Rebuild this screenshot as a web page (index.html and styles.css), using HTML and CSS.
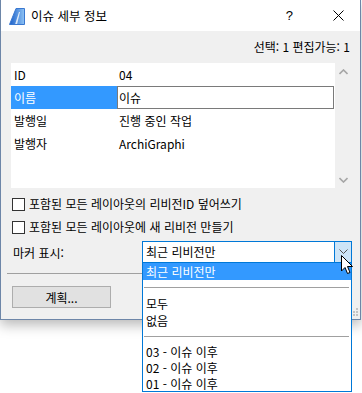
FILE: index.html
```html
<!DOCTYPE html>
<html lang="ko">

<head>
    <meta charset="UTF-8">
    <title>이슈 세부 정보</title>
    <link rel="stylesheet" href="styles.css">
</head>

<body>
    <div class="window">
        <!-- Title bar -->
        <div class="titlebar">
            <svg class="appIcon" width="16" height="17" viewBox="0 0 16 17">
                <defs>
                    <linearGradient id="ic" x1="0" y1="0" x2="1" y2="0">
                        <stop offset="0" stop-color="#1b5fc8" />
                        <stop offset="1" stop-color="#8ec3f5" />
                    </linearGradient>
                </defs>
                <path d="M0.5 16.5 L7 0.5 L15.5 0.5 L15.5 16.5 Z" fill="url(#ic)" />
                <path d="M6 16.5 L10 4 L11 4 L8 16.5 Z" fill="#ffffff" opacity="0.8" />
                <path d="M0.5 16.5 L7 0.5 L15.5 0.5 L15.5 16.5 Z" fill="none" stroke="#3a78d0" stroke-width="1" />
            </svg>
            <span class="title">이슈 세부 정보</span>
            <span class="help">?</span>
            <svg class="close" width="11" height="11" viewBox="0 0 11 11">
                <path d="M0.5 0.5 L10.5 10.5 M10.5 0.5 L0.5 10.5" stroke="#000" stroke-width="1" />
            </svg>
        </div>

        <div class="content">
            <div class="status">선택: 1 편집가능: 1</div>

            <div class="listBox">
                <div class="rows">
                    <div class="row">
                        <span class="key">ID</span>
                        <span class="val">04</span>
                    </div>
                    <div class="row selected">
                        <span class="key">이름</span>
                        <span class="val edit">이슈</span>
                    </div>
                    <div class="row">
                        <span class="key">발행일</span>
                        <span class="val">진행 중인 작업</span>
                    </div>
                    <div class="row">
                        <span class="key">발행자</span>
                        <span class="val">ArchiGraphi</span>
                    </div>
                </div>
                <div class="scrollbar">
                    <svg width="9" height="6" viewBox="0 0 9 6">
                        <path d="M0.5 5 L4.5 1 L8.5 5" fill="none" stroke="#a6a6a6" stroke-width="1.6" />
                    </svg>
                    <svg width="9" height="6" viewBox="0 0 9 6">
                        <path d="M0.5 1 L4.5 5 L8.5 1" fill="none" stroke="#a6a6a6" stroke-width="1.6" />
                    </svg>
                </div>
            </div>

            <div class="checks">
                <label class="check"><span class="box"></span>포함된 모든 레이아웃의 리비전ID 덮어쓰기</label>
                <label class="check"><span class="box"></span>포함된 모든 레이아웃에 새 리비전 만들기</label>
            </div>

            <div class="markerRow">
                <span class="markerLabel">마커 표시:</span>
                <div class="combo">
                    <span class="comboText">최근 리비전만</span>
                    <span class="comboBtn">
                        <svg width="9" height="6" viewBox="0 0 9 6">
                            <path d="M0.5 0.5 L4.5 4.5 L8.5 0.5" fill="none" stroke="#555" stroke-width="1" />
                        </svg>
                    </span>

                    <!-- open dropdown list -->
                    <div class="dropList">
                        <div class="item hot">최근 리비전만</div>
                        <div class="sep"></div>
                        <div class="item">모두</div>
                        <div class="item">없음</div>
                        <div class="sep"></div>
                        <div class="item small">03 - 이슈 이후</div>
                        <div class="item small">02 - 이슈 이후</div>
                        <div class="item small">01 - 이슈 이후</div>
                    </div>

                    <svg class="cursor" width="13" height="20" viewBox="0 0 13 20">
                        <path d="M0.5 0.5 L0.5 16 L4 12.5 L6.5 18.5 L9 17.5 L6.5 11.5 L11.5 11.5 Z" fill="#fff" stroke="#000" stroke-width="1" stroke-linejoin="round" />
                    </svg>
                </div>
            </div>

            <div class="divider"></div>

            <div class="buttons">
                <button class="planBtn">계획...</button>
            </div>
        </div>

        <svg class="grip" width="8" height="8" viewBox="0 0 8 8">
            <rect x="6" y="0" width="2" height="2" fill="#c4c4c4" />
            <rect x="3" y="3" width="2" height="2" fill="#c4c4c4" />
            <rect x="6" y="3" width="2" height="2" fill="#c4c4c4" />
            <rect x="0" y="6" width="2" height="2" fill="#c4c4c4" />
            <rect x="3" y="6" width="2" height="2" fill="#c4c4c4" />
            <rect x="6" y="6" width="2" height="2" fill="#c4c4c4" />
        </svg>
    </div>
</body>

</html>
```

FILE: styles.css
```css
html,
body {
    height: 393px;
}

body {
    margin: 0;
    background-color: #ffffff;
    font-family: "Noto Sans CJK KR", "Noto Sans", sans-serif;
    font-size: 12px;
    color: #000000;
}

.window {
    position: relative;
    width: 359px;
    background-color: #f0f0f0;
    border: 1px solid #6d86a8;
    border-top: none;
    box-shadow: 0 5px 12px rgba(0, 0, 0, 0.28);
}

/* title bar */
.titlebar {
    height: 31px;
    background-color: #ffffff;
    display: flex;
    align-items: center;
}

.appIcon {
    margin-left: 8px;
    margin-top: 1px;
}

.title {
    margin-left: 6px;
    font-size: 12.5px;
    line-height: 16px;
}

.help {
    margin-left: auto;
    font-size: 13px;
    line-height: 16px;
    font-family: "Liberation Sans", sans-serif;
}

.close {
    margin-left: 40px;
    margin-right: 16px;
}

.content {
    padding: 0 9px 11px 10px;
}

.status {
    height: 32px;
    line-height: 32px;
    text-align: right;
    padding-right: 1px;
}

/* property list */
.listBox {
    display: flex;
    height: 125px;
}

.rows {
    flex: 1;
    background-color: #ffffff;
}

.row {
    display: flex;
    height: 23px;
    align-items: center;
}

.key {
    width: 103px;
    padding-left: 3px;
    height: 100%;
    display: flex;
    align-items: center;
}

.val {
    flex: 1;
    padding-left: 2px;
    height: 100%;
    display: flex;
    align-items: center;
}

.selected .key {
    background-color: #3399ff;
    color: #ffffff;
}

.selected .val.edit {
    border: 1px solid #7a7a7a;
    box-sizing: border-box;
    padding-left: 1px;
    margin-right: 1px;
}

.scrollbar {
    width: 16px;
    display: flex;
    flex-direction: column;
    justify-content: space-between;
    align-items: center;
    padding: 6px 0 5px 0;
}

/* checkboxes */
.checks {
    margin-top: 9px;
    display: flex;
    flex-direction: column;
    gap: 9px;
}

.check {
    display: flex;
    align-items: center;
    height: 14px;
    line-height: 14px;
}

.box {
    width: 11px;
    height: 11px;
    border: 1px solid #333333;
    background-color: #ffffff;
    margin-left: 1px;
    margin-right: 4px;
}

/* marker combo */
.markerRow {
    margin-top: 7px;
    display: flex;
    align-items: center;
    height: 22px;
}

.markerLabel {
    flex: 1;
    padding-left: 2px;
}

.combo {
    position: relative;
    width: 208px;
    height: 20px;
    margin-right: -1px;
    border: 1px solid #0078d7;
    background-color: #ffffff;
    display: flex;
    align-items: center;
}

.comboText {
    flex: 1;
    padding-left: 3px;
    line-height: 16px;
}

.comboBtn {
    width: 16px;
    height: 20px;
    background-color: #cce4f7;
    border-left: 1px solid #0078d7;
    display: flex;
    align-items: center;
    justify-content: center;
}

.dropList {
    position: absolute;
    top: 21px;
    left: -1px;
    width: 208px;
    height: 128px;
    background-color: #ffffff;
    border: 1px solid #0078d7;
    border-top: none;
    z-index: 2;
}

.item {
    height: 17px;
    line-height: 17px;
    padding-left: 3px;
}

.item.small {
    height: 16px;
    line-height: 16px;
}

.item.hot {
    background-color: #3399ff;
    color: #ffffff;
}

.sep {
    height: 1px;
    background-color: #a0a0a0;
    margin: 7px 2px 7px 1px;
}

.cursor {
    position: absolute;
    left: 198px;
    top: 13px;
    z-index: 3;
}

/* bottom */
.divider {
    margin-top: 10px;
    margin-left: -4px;
    height: 1px;
    background-color: #a0a0a0;
}

.buttons {
    margin-top: 12px;
    display: flex;
}

.planBtn {
    margin-left: 1px;
    width: 99px;
    height: 22px;
    background-color: #e1e1e1;
    border: 1px solid #adadad;
    font-family: "Noto Sans CJK KR", "Noto Sans", sans-serif;
    font-size: 12px;
    padding: 0;
}

.grip {
    position: absolute;
    right: 2px;
    bottom: 3px;
}
```
